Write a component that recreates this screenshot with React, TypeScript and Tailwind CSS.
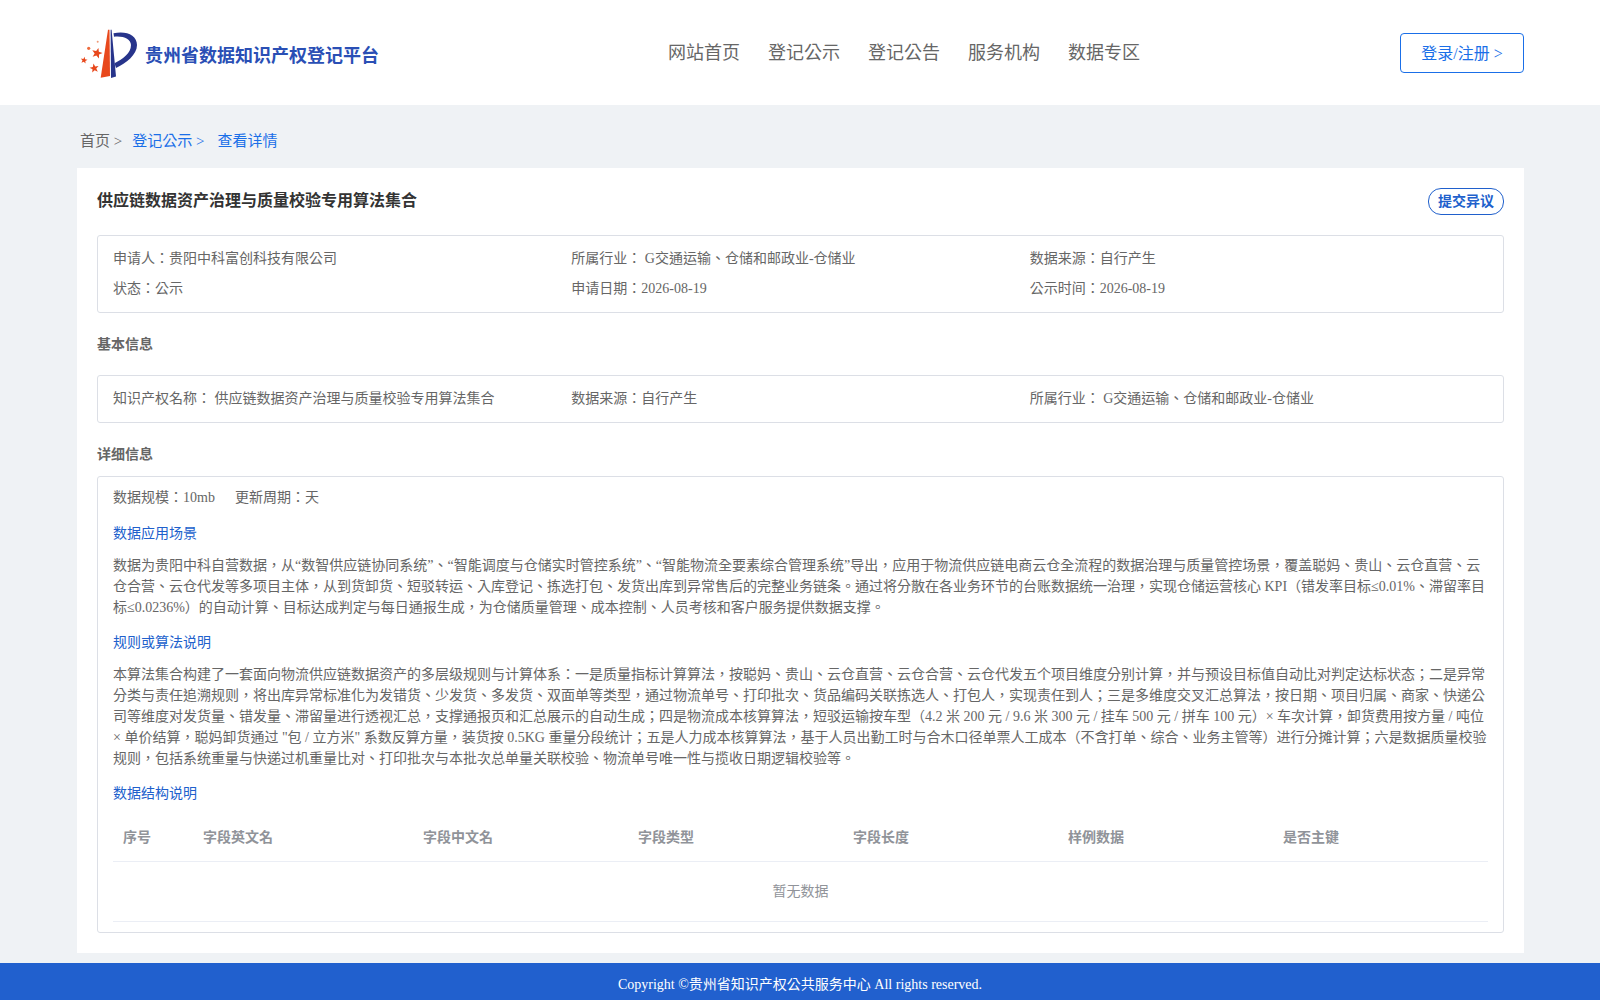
import React from 'react';

const font = 'font-["Liberation_Serif","Noto_Sans_CJK_TC",serif]';

function Star({ x, y, r, rot = 0 }: { x: number; y: number; r: number; rot?: number }) {
  const pts = Array.from({ length: 10 }, (_, i) => {
    const a = ((i * 36 + rot - 90) * Math.PI) / 180;
    const d = i % 2 ? r * 0.42 : r;
    return `${x + d * Math.cos(a)},${y + d * Math.sin(a)}`;
  }).join(' ');
  return <polygon points={pts} fill="#e8481c" />;
}

function Logo() {
  return (
    <svg width="58" height="50" viewBox="0 0 58 50" className="shrink-0">
      <path d="M20.7 48.7 L28 .7 L29.5 .7 L30 47 Z" fill="#e8481c" />
      <path d="M30.6 .7 L31.6 .7 L36 47.5 L31 49 Z" fill="#27348b" />
      <path d="M33.5 4.3 C46 1.5 57 6 57 16 C57 26 46 34 36 39 L34.5 34.3 C43 30 51 24 51 16 C51 10 43 6.5 34 7.7 Z" fill="#27348b" />
      <Star x={17} y={24.3} r={5.6} rot={15} />
      <Star x={4} y={31.3} r={3.6} rot={10} />
      <Star x={14.3} y={39.3} r={4.8} rot={-10} />
      <circle cx="8.7" cy="19.3" r="1.6" fill="#ee6a3c" />
      <circle cx="17.7" cy="12.7" r="1" fill="#ee9a78" />
    </svg>
  );
}

function Info({ rows }: { rows: string[][] }) {
  return (
    <div className="grid grid-cols-3 gap-y-[9px] text-[14px] leading-[21px] text-[#666]">
      {rows.flat().map((t, i) => (
        <div key={i}>{t}</div>
      ))}
    </div>
  );
}

const columns = ['序号', '字段英文名', '字段中文名', '字段类型', '字段长度', '样例数据', '是否主键'];

export default function App() {
  return (
    <div className={`${font} h-[1000px] overflow-hidden bg-[#eff2f5] flex flex-col`}>
      <header className="h-[105px] shrink-0 bg-white">
        <div className="w-[1447px] ml-[77px] h-full flex items-center justify-between relative">
          <div className="flex items-center pl-[3px] pt-[2px]">
            <Logo />
            <span className="ml-[7px] pt-[6px] text-[18px] font-bold text-[#2a4fb5]">贵州省数据知识产权登记平台</span>
          </div>
          <nav className="absolute left-[591px] top-[39px] flex gap-[28px] text-[18px] leading-[28px] text-[#666]">
            <a>网站首页</a>
            <a>登记公示</a>
            <a>登记公告</a>
            <a>服务机构</a>
            <a>数据专区</a>
          </nav>
          <button className="w-[124px] h-[40px] border border-[#1a6fe8] rounded pt-[2px] text-[16px] text-[#1a6fe8] bg-white">
            登录/注册 &gt;
          </button>
        </div>
      </header>

      <main className="w-[1447px] ml-[77px] shrink-0">
        <div className="h-[63px] flex items-center pl-[3px] text-[15px] text-[#666] pt-[10px]">
          <span>首页 &gt;</span>
          <span className="ml-[10px] text-[#1a6fe8]">登记公示 &gt;</span>
          <span className="ml-[13px] text-[#1a6fe8]">查看详情</span>
        </div>

        <div className="bg-white p-[20px]">
          <div className="flex justify-between items-start h-[47px]">
            <h1 className="text-[16px] leading-[26px] font-bold text-[#333]">供应链数据资产治理与质量校验专用算法集合</h1>
            <button className="w-[76px] h-[27px] border border-[#2060cc] rounded-[13px] text-[14px] font-bold text-[#2060cc]">
              提交异议
            </button>
          </div>

          <div className="border border-[#dcdfe6] rounded-[3px] px-[15px] pt-[12px] h-[78px]">
            <Info
              rows={[
                ['申请人：贵阳中科富创科技有限公司', '所属行业： G交通运输、仓储和邮政业-仓储业', '数据来源：自行产生'],
                ['状态：公示', '申请日期：2026-08-19', '公示时间：2026-08-19'],
              ]}
            />
          </div>

          <h2 className="h-[62px] flex items-center text-[14px] font-bold text-[#666]">基本信息</h2>

          <div className="border border-[#dcdfe6] rounded-[3px] px-[15px] h-[48px] flex items-center pb-[2px]">
            <div className="w-full">
              <Info rows={[['知识产权名称： 供应链数据资产治理与质量校验专用算法集合', '数据来源：自行产生', '所属行业： G交通运输、仓储和邮政业-仓储业']]} />
            </div>
          </div>

          <h2 className="h-[53px] flex items-center pt-[10px] text-[14px] font-bold text-[#666]">详细信息</h2>

          <div className="border border-[#dcdfe6] rounded-[3px] px-[15px] pt-[6px] pb-[10px] text-[14px] leading-[21px] text-[#666]">
            <div className="flex gap-[20px] h-[28px] items-center">
              <span>数据规模：10mb</span>
              <span>更新周期：天</span>
            </div>
            <div className="mt-[12px] text-[#2060cc]">数据应用场景</div>
            <p className="mt-[11px]">
              数据为贵阳中科自营数据，从“数智供应链协同系统”、“智能调度与仓储实时管控系统”、“智能物流全要素综合管理系统”导出，应用于物流供应链电商云仓全流程的数据治理与质量管控场景，覆盖聪妈、贵山、云仓直营、云仓合营、云仓代发等多项目主体，从到货卸货、短驳转运、入库登记、拣选打包、发货出库到异常售后的完整业务链条。通过将分散在各业务环节的台账数据统一治理，实现仓储运营核心 KPI（错发率目标≤0.01%、滞留率目标≤0.0236%）的自动计算、目标达成判定与每日通报生成，为仓储质量管理、成本控制、人员考核和客户服务提供数据支撑。
            </p>
            <div className="mt-[14px] text-[#2060cc]">规则或算法说明</div>
            <p className="mt-[11px]">
              本算法集合构建了一套面向物流供应链数据资产的多层级规则与计算体系：一是质量指标计算算法，按聪妈、贵山、云仓直营、云仓合营、云仓代发五个项目维度分别计算，并与预设目标值自动比对判定达标状态；二是异常分类与责任追溯规则，将出库异常标准化为发错货、少发货、多发货、双面单等类型，通过物流单号、打印批次、货品编码关联拣选人、打包人，实现责任到人；三是多维度交叉汇总算法，按日期、项目归属、商家、快递公司等维度对发货量、错发量、滞留量进行透视汇总，支撑通报页和汇总展示的自动生成；四是物流成本核算算法，短驳运输按车型（4.2 米 200 元 / 9.6 米 300 元 / 挂车 500 元 / 拼车 100 元）× 车次计算，卸货费用按方量 / 吨位 × 单价结算，聪妈卸货通过 "包 / 立方米" 系数反算方量，装货按 0.5KG 重量分段统计；五是人力成本核算算法，基于人员出勤工时与合木口径单票人工成本（不含打单、综合、业务主管等）进行分摊计算；六是数据质量校验规则，包括系统重量与快递过机重量比对、打印批次与本批次总单量关联校验、物流单号唯一性与揽收日期逻辑校验等。
            </p>
            <div className="mt-[14px] text-[#2060cc]">数据结构说明</div>
            <table className="mt-[9px] w-full table-fixed border-collapse">
              <colgroup>
                <col className="w-[80px]" />
                <col className="w-[220px]" />
              </colgroup>
              <thead>
                <tr className="h-[48px] border-b border-[#ebeef5]">
                  {columns.map((c) => (
                    <th key={c} className="px-[10px] pt-[2px] text-left font-bold text-[#909399]">
                      {c}
                    </th>
                  ))}
                </tr>
              </thead>
              <tbody>
                <tr className="h-[60px] border-b border-[#ebeef5]">
                  <td colSpan={7} className="text-center text-[#909399]">
                    暂无数据
                  </td>
                </tr>
              </tbody>
            </table>
          </div>
        </div>
      </main>

      <footer className="mt-[10px] h-[37px] shrink-0 bg-[#2160ce] pt-[11px] text-center text-[14px] leading-[21px] text-white">
        Copyright ©贵州省知识产权公共服务中心 All rights reserved.
      </footer>
    </div>
  );
}
